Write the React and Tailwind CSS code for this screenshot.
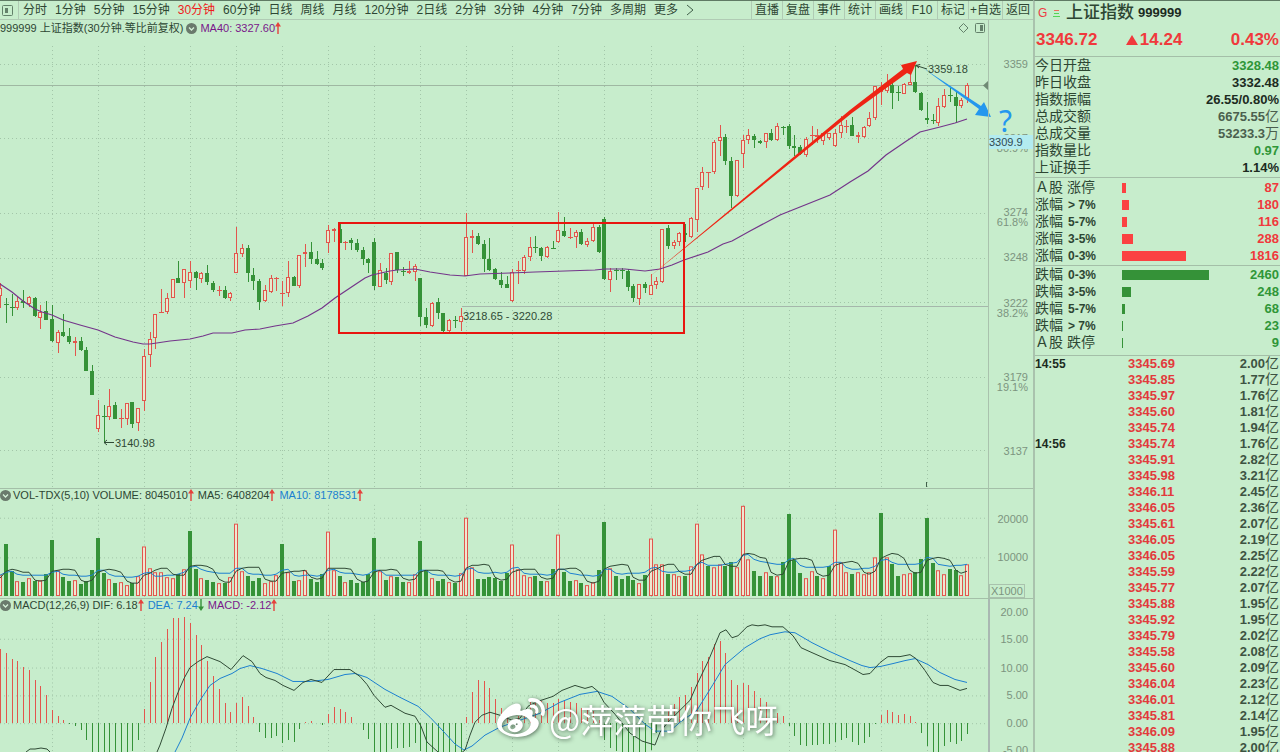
import React from "react";
import { FaWeibo } from "react-icons/fa";

const RED = "#e2554d";
const GREEN = "#359238";
const STEP = 5.757;
const PLOT_W = 988;

// each plot keeps its own slice of one shared vertical scale
const PRICE = { top: 20, height: 468 };
const VOLUME = { top: 488, height: 110 };
const MACD = { top: 598, height: 154 };

// [up, high, body top, body bottom, low]
const candles = [
  [1, 283, 288, 296, 308], [0, 298, 304, 305, 323], [0, 294, 307, 307, 316], [1, 297, 301, 308, 310],
  [0, 290, 301, 303, 308], [1, 296, 297, 304, 307], [0, 297, 298, 316, 317], [1, 305, 312, 318, 329],
  [0, 301, 311, 320, 320], [0, 305, 319, 341, 342], [1, 330, 332, 343, 353], [0, 314, 332, 336, 337],
  [0, 328, 336, 342, 344], [1, 337, 341, 343, 356], [0, 337, 341, 350, 351], [0, 347, 350, 371, 371],
  [0, 365, 371, 395, 395], [1, 400, 415, 429, 432], [0, 405, 416, 417, 443], [1, 389, 406, 417, 420],
  [0, 402, 405, 419, 419], [1, 409, 418, 419, 428], [1, 403, 403, 419, 425], [0, 402, 402, 424, 428],
  [1, 408, 408, 423, 431], [1, 349, 356, 401, 411], [1, 332, 339, 355, 367], [1, 314, 314, 338, 349],
  [1, 289, 312, 313, 313], [1, 293, 298, 312, 314], [1, 279, 279, 298, 298], [0, 261, 278, 283, 283],
  [1, 269, 269, 283, 298], [1, 261, 272, 281, 288], [0, 271, 272, 278, 290], [1, 272, 273, 279, 283],
  [0, 265, 273, 282, 285], [0, 281, 283, 290, 292], [1, 286, 290, 291, 296], [0, 286, 290, 298, 299],
  [1, 292, 293, 298, 301], [1, 227, 253, 273, 273], [1, 244, 248, 254, 257], [0, 245, 248, 273, 282],
  [0, 268, 275, 281, 290], [0, 279, 281, 302, 310], [1, 285, 290, 301, 302], [1, 275, 278, 292, 293],
  [1, 277, 278, 279, 291], [1, 281, 293, 294, 306], [1, 261, 277, 293, 297], [0, 276, 277, 286, 286],
  [1, 255, 255, 286, 288], [1, 244, 252, 254, 267], [0, 242, 252, 259, 264], [0, 251, 259, 264, 265],
  [0, 259, 263, 268, 270], [1, 225, 230, 243, 253], [1, 228, 229, 231, 242], [0, 223, 229, 243, 243],
  [1, 241, 242, 243, 250], [0, 238, 240, 243, 250], [0, 239, 243, 250, 252], [0, 247, 250, 259, 265],
  [0, 258, 259, 263, 273], [0, 238, 242, 286, 290], [1, 263, 270, 287, 287], [0, 268, 273, 280, 284],
  [1, 253, 253, 282, 285], [0, 252, 252, 270, 273], [0, 267, 271, 272, 276], [1, 261, 271, 273, 274],
  [1, 264, 266, 272, 281], [0, 278, 278, 317, 326], [0, 308, 317, 325, 328], [1, 302, 303, 326, 327],
  [0, 298, 302, 313, 319], [0, 313, 313, 331, 332], [1, 319, 320, 331, 333], [0, 316, 320, 321, 328],
  [1, 308, 316, 322, 331], [1, 213, 237, 276, 276], [1, 230, 236, 238, 253], [0, 233, 236, 244, 245],
  [0, 240, 244, 259, 272], [0, 238, 259, 270, 271], [0, 268, 269, 279, 280], [0, 272, 280, 285, 288],
  [0, 276, 284, 288, 288], [1, 269, 272, 301, 302], [1, 261, 270, 271, 284], [1, 255, 257, 271, 274],
  [1, 237, 247, 257, 261], [0, 236, 247, 248, 253], [0, 247, 248, 256, 261], [1, 246, 247, 257, 258],
  [0, 241, 248, 249, 249], [1, 212, 230, 242, 243], [0, 217, 231, 236, 237], [1, 228, 237, 238, 239],
  [1, 230, 232, 237, 248], [0, 229, 232, 244, 245], [1, 238, 241, 245, 247], [1, 222, 227, 241, 242],
  [0, 225, 227, 252, 253], [0, 217, 219, 279, 280], [1, 268, 271, 280, 292], [0, 268, 270, 271, 280],
  [0, 268, 270, 271, 279], [0, 269, 271, 287, 291], [0, 284, 286, 298, 302], [1, 284, 284, 299, 305],
  [0, 282, 284, 288, 293], [1, 274, 285, 295, 295], [1, 277, 281, 285, 289], [1, 229, 229, 282, 283],
  [0, 225, 228, 246, 249], [1, 240, 242, 246, 249], [1, 232, 233, 242, 246], [0, 224, 233, 235, 242],
  [1, 217, 218, 237, 238], [1, 188, 188, 220, 232], [1, 167, 172, 187, 190], [1, 172, 172, 173, 188],
  [1, 140, 142, 172, 174], [1, 125, 137, 141, 156], [0, 134, 137, 161, 165], [0, 157, 161, 196, 208],
  [1, 160, 160, 196, 197], [1, 135, 140, 154, 168], [1, 129, 135, 140, 144], [0, 134, 136, 140, 148],
  [0, 140, 141, 143, 144], [1, 133, 133, 142, 148], [0, 129, 133, 140, 141], [1, 123, 126, 140, 141],
  [0, 126, 127, 128, 135], [0, 124, 126, 146, 149], [0, 135, 146, 148, 156], [0, 145, 147, 154, 155],
  [1, 137, 139, 155, 157], [1, 126, 135, 136, 145], [1, 129, 135, 137, 143], [1, 133, 133, 141, 145],
  [1, 133, 133, 138, 140], [1, 129, 133, 146, 147], [1, 116, 125, 133, 138], [1, 120, 126, 127, 133],
  [0, 117, 125, 136, 136], [1, 132, 135, 137, 143], [1, 126, 127, 137, 138], [1, 112, 118, 126, 127],
  [1, 86, 86, 118, 120], [1, 82, 87, 92, 105], [1, 74, 86, 91, 93], [0, 82, 85, 93, 109],
  [0, 86, 92, 93, 101], [1, 83, 84, 94, 94], [1, 72, 82, 85, 85], [0, 65, 82, 92, 93],
  [0, 92, 93, 110, 111], [0, 102, 118, 120, 124], [0, 114, 120, 121, 124], [1, 98, 106, 123, 126],
  [1, 89, 95, 107, 108], [0, 88, 95, 96, 102], [0, 92, 97, 106, 122], [1, 98, 100, 106, 108],
  [1, 83, 85, 98, 103],
];

// negative = falling bar
const volumes = [
  62, -157, -74, 44, -43, 53, -46, 47, -65, -172, 78, -56, -44, 48, -35, -46, -77, -176, -69, 50,
  -38, 42, 34, -39, 59, 151, 84, 73, 73, 58, 55, -67, 82, -199, -82, 55, -48, -43, 40, -38,
  58, 218, 76, -61, -44, -53, 40, 44, 64, -157, 73, -45, 48, 79, -50, -43, -67, 194, 78, -59,
  43, -47, -40, -42, -67, -176, 74, -47, 59, -56, -43, 43, 66, -168, -78, 54, -45, -50, 43, -40,
  69, 238, 86, -52, -50, -56, -54, -45, -68, 157, 80, 63, 56, -59, -44, 44, -80, 187, -71, -46,
  48, -40, 34, 43, -77, -224, 84, -59, -50, -59, -48, 40, -63, 175, 97, 95, -67, 66, 59, -61,
  90, 219, 127, -90, 88, 97, -90, -103, 88, 274, 112, -74, -59, 71, -61, 60, -101, -248, -107, -68,
  55, 76, -59, 55, -89, 202, 103, 73, -67, 72, 67, 73, 118, -253, 118, -95, -59, 67, 69, -71,
  -110, -238, -98, 79, 67, -80, -77, 64, 96,
];

const histogram = [
  226, 212, 196, 188, 172, 163, 130, 111, 84, 39, 22, 10, -4, -10, -22, -52, -90, -95, -95, -95,
  -95, -95, -95, -83, -50, 41, 122, 202, 247, 285, 319, 319, 322, 303, 268, 238, 188, 142, 103, 60,
  34, 60, 78, 51, 19, -28, -46, -45, -40, -60, -52, -56, -19, 4, 7, 0, -5, 28, 48, 41,
  34, 19, 0, -22, -47, -90, -95, -90, -78, -76, -75, -72, -60, -85, -95, -95, -95, -95, -95, -95,
  -88, 19, 93, 130, 127, 105, 73, 46, 25, 10, 20, 38, 62, 72, 66, 60, 60, 73, 70, 62,
  60, 45, 40, 35, 10, -52, -75, -85, -95, -95, -95, -95, -90, -80, -30, -10, 35, 58, 79, 85,
  108, 153, 189, 202, 240, 250, 212, 130, 113, 120, 115, 97, 74, 62, 45, 30, 20, -10, -38, -67,
  -68, -65, -67, -62, -64, -56, -50, -46, -57, -65, -60, -43, -2, 23, 39, 34, 25, 27, 21, 3,
  -30, -68, -95, -95, -68, -56, -62, -53, -33,
];

const ma40 =
  "0,284 12,292 23,301 35,309 42,312 52,315 63,320 80,325 98,330 115,337 133,342 143,344 150,344 170,341 190,339 203,336 213,333 232,333 245,330 260,329 275,326 293,323 308,316 322,308 335,298 350,288 365,278 372,275 390,271 397,270 415,269 430,272 450,275 465,276 480,274 510,273 535,272 595,270 605,269 625,269 645,271 660,269 672,265 684,260 708,252 723,244 732,241 750,231 780,215 800,207 830,195 850,182 868,171 886,155 905,142 920,132 940,127 955,123 967,119";
const dif =
  "26,752 30,749 35,749 41,748 47,749 50,752 60,790 140,790 157,752 160,745 166,728 172,708 178,692 184,678 190,667 198,661 207,656 220,661 231,669 243,655 252,661 260,673 266,677 275,680 283,685 294,690 303,682 311,679 322,682 334,669 350,669 360,676 367,684 374,695 385,707 391,705 405,713 415,716 421,726 427,742 438,752 450,762 465,750 470,735 475,722 482,715 490,712 500,715 512,720 520,718 528,706 538,701 553,696 562,690 575,685 585,688 592,686 598,691 604,702 615,714 630,733 642,741 655,745 660,732 668,722 680,710 690,700 697,684 708,661 720,632 726,629 732,637 738,635 747,626 752,624 758,625 765,624 772,626 783,626 793,635 801,647 812,652 830,660 845,664 856,670 863,674 870,673 880,662 888,656 900,656 910,654 916,658 925,670 933,682 940,685 948,685 960,690 967,688";
const dea =
  "175,752 182,738 190,718 200,700 210,685 220,678 232,673 240,668 250,665 262,668 277,673 293,681 310,681 328,679 345,674 355,673 367,677 385,689 400,697 418,706 430,717 445,733 455,744 464,750 472,746 485,735 500,727 520,720 540,713 560,702 580,694 597,691 612,696 630,709 645,724 655,731 670,731 680,722 697,710 713,684 725,664 745,647 760,638 770,634 785,631 795,632 812,642 830,651 850,660 862,665 870,667 880,666 893,663 905,660 915,658 928,664 940,672 955,679 967,682";

const periods = [
  "分时", "1分钟", "5分钟", "15分钟", "30分钟", "60分钟", "日线", "周线", "月线", "120分钟",
  "2日线", "2分钟", "3分钟", "4分钟", "7分钟", "多周期", "更多",
];
const actions = ["直播", "复盘", "事件", "统计", "画线", "F10", "标记", "+自选", "返回"];

const quotes = [
  { label: "今日开盘", value: "3328.48", color: "text-[#2f9638]" },
  { label: "昨日收盘", value: "3332.48", color: "text-[#1c2b1f]" },
  { label: "指数振幅", value: "26.55/0.80%", color: "text-[#1c2b1f]" },
  { label: "总成交额", value: "6675.55", unit: "亿", color: "text-[#4b5f4e]" },
  { label: "总成交量", value: "53233.3", unit: "万", color: "text-[#4b5f4e]" },
  { label: "指数量比", value: "0.97", color: "text-[#2f9638]" },
  { label: "上证换手", value: "1.14%", color: "text-[#1c2b1f]" },
];

const risers = [
  { name: "Ａ股 涨停", range: "", count: 87, bar: 4 },
  { name: "涨幅", range: "> 7%", count: 180, bar: 7 },
  { name: "涨幅", range: "5-7%", count: 116, bar: 5 },
  { name: "涨幅", range: "3-5%", count: 288, bar: 11 },
  { name: "涨幅", range: "0-3%", count: 1816, bar: 64 },
];
const fallers = [
  { name: "跌幅", range: "0-3%", count: 2460, bar: 87 },
  { name: "跌幅", range: "3-5%", count: 248, bar: 9 },
  { name: "跌幅", range: "5-7%", count: 68, bar: 3 },
  { name: "跌幅", range: "> 7%", count: 23, bar: 1 },
  { name: "Ａ股 跌停", range: "", count: 9, bar: 1 },
];

const trades = [
  ["14:55", "3345.69", "2.00"], ["", "3345.85", "1.77"], ["", "3345.97", "1.76"],
  ["", "3345.60", "1.81"], ["", "3345.74", "1.94"], ["14:56", "3345.74", "1.76"],
  ["", "3345.91", "2.82"], ["", "3345.98", "3.21"], ["", "3346.11", "2.45"],
  ["", "3346.05", "2.36"], ["", "3345.61", "2.07"], ["", "3346.05", "2.19"],
  ["", "3346.05", "2.25"], ["", "3345.59", "2.22"], ["", "3345.77", "2.07"],
  ["", "3345.88", "1.95"], ["", "3345.92", "1.95"], ["", "3345.79", "2.02"],
  ["", "3345.58", "2.08"], ["", "3345.60", "2.09"], ["", "3346.04", "2.23"],
  ["", "3346.01", "2.12"], ["", "3345.81", "2.14"], ["", "3346.09", "1.95"],
  ["", "3345.88", "2.00"],
];

const cx = (i) => Math.round(i * STEP);
const topPct = (y, area) => `${((y - area.top) / area.height) * 100}%`;
const leftPct = (x) => `${(x / PLOT_W) * 100}%`;

// moving average of the volume bars, as polyline points
const volumeAverage = (n) => {
  const seed = [50, 50, 150, 70, 50, 50, 50, 60, 62];
  const all = [...seed, ...volumes.map(Math.abs)];
  return volumes
    .map((_, i) => {
      const end = i + seed.length + 1;
      const sum = all.slice(end - n, end).reduce((a, b) => a + b, 0);
      return `${cx(i)},${Math.round(597 - sum / n / 3)}`;
    })
    .join(" ");
};

const Grid = ({ rows, top, bottom }) => (
  <g stroke="#a3c6a9" strokeDasharray="1 3" shapeRendering="crispEdges">
    {rows.map((y) => (
      <line key={y} x1="0" x2="988" y1={y + 0.5} y2={y + 0.5} />
    ))}
    {Array.from({ length: 20 }, (_, k) => cx(9 + k * 8)).map((x) => (
      <line key={x} x1={x + 0.5} x2={x + 0.5} y1={top} y2={bottom} />
    ))}
  </g>
);

const Plot = ({ area, children }) => (
  <svg
    viewBox={`0 ${area.top} ${PLOT_W} ${area.height}`}
    preserveAspectRatio="none"
    className="absolute inset-0 h-full w-full overflow-visible"
    aria-hidden="true"
  >
    {children}
  </svg>
);

const Tick = ({ y, area, children }) => (
  <span
    className="absolute right-[5px] -translate-y-1/2 leading-3 text-[#7c947f]"
    style={{ top: topPct(y, area) }}
  >
    {children}
  </span>
);

const Dot = () => (
  <svg viewBox="0 0 11 11" className="h-[11px] w-[11px] shrink-0">
    <circle cx="5.5" cy="5.5" r="5.5" fill="#6a7a6c" />
    <path d="M3 4.5 5.5 7 8 4.5" fill="none" stroke="#d5f0d8" strokeWidth="1.3" />
  </svg>
);

const Arrow = ({ down }) => (
  <svg viewBox="0 0 6 12" className="h-3 w-[6px] shrink-0">
    {down ? (
      <path d="M2.300 0h1.400v7.500H6L3 12 0 7.500h2.300z" fill={GREEN} />
    ) : (
      <path d="M2.300 12h1.400V4.500H6L3 0 0 4.500h2.300z" fill="#e5413c" />
    )}
  </svg>
);

const PriceChart = () => (
  <section className="relative flex min-h-0 flex-1">
    <div className="relative min-w-0 flex-1">
      <Plot area={PRICE}>
        <Grid rows={[64, 138, 213, 258, 302, 377, 450]} top={46} bottom={487} />
        <g shapeRendering="crispEdges">
          <line x1="0" x2="988" y1="85.5" y2="85.5" stroke="#9fb8a2" />
          <line x1="462" x2="988" y1="306.5" y2="306.5" stroke="#a5b7ab" />
          <line x1="926.5" x2="926.5" y1="482" y2="487" stroke="#41604a" />
          {candles.map(([up, high, top, bottom, low], i) => {
            const x = cx(i);
            const color = up ? RED : GREEN;
            return (
              <g key={i}>
                <line x1={x + 0.5} x2={x + 0.5} y1={high} y2={low} stroke={color} />
                {bottom - top < 2 ? (
                  <rect x={x - 2} y={top} width="5" height="1" fill={color} />
                ) : up ? (
                  <rect x={x - 1.5} y={top + 0.5} width="3" height={bottom - top - 1} fill="#e6ebcd" stroke={color} />
                ) : (
                  <rect x={x - 2} y={top} width="4" height={bottom - top} fill={color} />
                )}
              </g>
            );
          })}
        </g>
        <polyline points={ma40} fill="none" stroke="#74358a" strokeWidth="1.2" />
        <path d="M114 442.5H104M107 440l-3 2.5 3 2.5" fill="none" stroke="#2f4a35" />
        <path d="M927 69 916 65.5M919 68l-3-2.5 4-1" fill="none" stroke="#2f4a35" />
        <rect x="339" y="223" width="345" height="110" fill="none" stroke="#e8160f" strokeWidth="2" />
        <polygon points="648,278 850,110 903,69 901,65 917,61 911,75 907,73 852,113" fill="#ee2414" />
        <polygon points="923,68 981,106 984,102 991,117 975,115 979,109" fill="#2497ee" />
        <path d="M988 81v9l-5-4.500z" fill="#6f8a74" />
      </Plot>
      <div className="relative flex h-4 items-center gap-[3px] whitespace-nowrap text-[#2d4633]">
        <span>999999 上证指数(30分钟.等比前复权)</span>
        <Dot />
        <span className="flex items-center text-[#79178a]">
          MA40: 3327.60
          <Arrow />
        </span>
        <svg viewBox="0 0 28 12" className="mr-[2px] ml-auto h-3 w-7" fill="none" stroke="#63806a">
          <path d="M5.500 1.500 10 6 5.500 10.500 1 6z" />
          <rect x="17.500" y="1.500" width="9" height="9" rx="1" />
          <rect x="22" y="3" width="3" height="6" fill="#63806a" stroke="none" />
        </svg>
      </div>
      <span
        className="absolute -translate-y-1/2 text-[#2f4a35]"
        style={{ left: leftPct(115), top: topPct(443, PRICE) }}
      >
        3140.98
      </span>
      <span
        className="absolute -translate-y-1/2 text-[#2f4a35]"
        style={{ left: leftPct(463), top: topPct(316, PRICE) }}
      >
        3218.65 - 3220.28
      </span>
      <span
        className="absolute -translate-y-1/2 text-[#2f4a35]"
        style={{ left: leftPct(928), top: topPct(69, PRICE) }}
      >
        3359.18
      </span>
    </div>
    <div className="relative w-[45px] border-l border-[#a9c2ad]">
      <Tick y={64} area={PRICE}>3359</Tick>
      <Tick y={138} area={PRICE}>3317</Tick>
      <Tick y={148} area={PRICE}>80.9%</Tick>
      <Tick y={212} area={PRICE}>3274</Tick>
      <Tick y={222} area={PRICE}>61.8%</Tick>
      <Tick y={257} area={PRICE}>3248</Tick>
      <Tick y={303} area={PRICE}>3222</Tick>
      <Tick y={313} area={PRICE}>38.2%</Tick>
      <Tick y={377} area={PRICE}>3179</Tick>
      <Tick y={387} area={PRICE}>19.1%</Tick>
      <Tick y={451} area={PRICE}>3137</Tick>
      <span
        className="absolute left-0 w-11 -translate-y-1/2 bg-[#b3ecf0] leading-[14px] text-[#2f4a52]"
        style={{ top: topPct(142, PRICE) }}
      >
        3309.9
      </span>
      <span
        className="absolute left-[10px] -translate-y-1/2 font-['Noto_Sans',sans-serif] text-[30px] leading-none text-[#2497ee]"
        style={{ top: topPct(121, PRICE) }}
      >
        ?
      </span>
    </div>
  </section>
);

const VolumeChart = () => (
  <section className="flex h-[110px] shrink-0 border-t border-[#a4bfa8]">
    <div className="relative min-w-0 flex-1">
      <Plot area={VOLUME}>
        <Grid rows={[517, 557]} top={504} bottom={597} />
        <g shapeRendering="crispEdges">
          {volumes.map((v, i) => {
            const h = Math.round(Math.abs(v) / 3);
            const x = cx(i);
            return v > 0 ? (
              <rect key={i} x={x - 1.5} y={596.5 - h} width="3" height={h - 1} fill="#f0e6d0" stroke={RED} />
            ) : (
              <rect key={i} x={x - 2} y={596 - h} width="4" height={h} fill={GREEN} />
            );
          })}
        </g>
        <polyline points={volumeAverage(10)} fill="none" stroke="#1b7fd0" />
        <polyline points={volumeAverage(5)} fill="none" stroke="#2f4a35" />
      </Plot>
      <div className="relative flex h-3 items-center whitespace-nowrap text-[#2d4633]">
        <Dot />
        <span className="ml-[2px]">VOL-TDX(5,10)</span>
        <span className="ml-[3px]">VOLUME: 8045010</span>
        <Arrow />
        <span className="ml-1">MA5: 6408204</span>
        <Arrow />
        <span className="ml-1 text-[#1b7fd0]">MA10: 8178531</span>
        <Arrow />
      </div>
    </div>
    <div className="relative w-[45px] border-l border-[#a9c2ad]">
      <Tick y={518} area={VOLUME}>20000</Tick>
      <Tick y={557} area={VOLUME}>10000</Tick>
      <span className="absolute bottom-0 left-0 border border-[#a9c2ad] px-px leading-3 text-[#7c947f]">
        X1000
      </span>
    </div>
  </section>
);

const MacdChart = () => (
  <section className="flex h-[154px] shrink-0 border-t border-[#a4bfa8]">
    <div className="relative min-w-0 flex-1 overflow-hidden">
      <Plot area={MACD}>
        <Grid rows={[638, 667, 695, 723]} top={614} bottom={752} />
        <g shapeRendering="crispEdges">
          {histogram.map((v, i) => {
            const h = Math.round(Math.abs(v) / 3);
            return (
              <rect
                key={i}
                x={cx(i)}
                y={v > 0 ? 723 - h : 723}
                width="1"
                height={h}
                fill={v > 0 ? RED : GREEN}
              />
            );
          })}
        </g>
        <polyline points={dea} fill="none" stroke="#1b7fd0" />
        <polyline points={dif} fill="none" stroke="#2f4a35" />
      </Plot>
      <div className="relative flex h-3 items-center whitespace-nowrap text-[#2d4633]">
        <Dot />
        <span className="ml-[2px]">MACD(12,26,9)</span>
        <span className="ml-[3px]">DIF: 6.18</span>
        <Arrow />
        <span className="ml-1 text-[#1b7fd0]">DEA: 7.24</span>
        <Arrow down />
        <span className="ml-1 text-[#79178a]">MACD: -2.12</span>
        <Arrow />
      </div>
      <div
        className="absolute flex -translate-y-1/2 items-center gap-1 whitespace-nowrap text-white drop-shadow-[1px_1px_2px_rgba(40,60,45,0.7)]"
        style={{ left: leftPct(497), top: topPct(719, MACD) }}
      >
        <FaWeibo className="h-12 w-12" />
        <span className="font-['Noto_Sans_CJK_SC',sans-serif] text-[33px] leading-none">@萍萍带你飞呀</span>
      </div>
    </div>
    <div className="relative w-[45px] overflow-hidden border-l-2 border-[#a9b8b2]">
      <Tick y={611} area={MACD}>20.00</Tick>
      <Tick y={638} area={MACD}>15.00</Tick>
      <Tick y={667} area={MACD}>10.00</Tick>
      <Tick y={695} area={MACD}>5.00</Tick>
      <Tick y={723} area={MACD}>0.00</Tick>
      <Tick y={750} area={MACD}>-5.00</Tick>
    </div>
  </section>
);

const Toolbar = () => (
  <nav className="flex h-5 shrink-0 items-center border-t border-b border-t-[#5f7a64] border-b-[#b0cbb4] text-[12px] leading-4 whitespace-nowrap text-[#2d4633]">
    <button type="button" aria-label="侧栏" className="flex h-full w-[19px] items-center border-r border-[#b0cbb4] pl-[2px]">
      <svg viewBox="0 0 11 11" className="h-[11px] w-[11px]" fill="none" stroke="#63806a">
        <rect x="0.500" y="0.500" width="10" height="10" rx="1" />
        <rect x="3" y="3" width="3" height="5" fill="#63806a" stroke="none" />
      </svg>
    </button>
    <div className="flex gap-2 pl-1">
      {periods.map((p) => (
        <button key={p} type="button" className={p === "30分钟" ? "text-[#ee1c1c]" : ""}>
          {p}
        </button>
      ))}
      <svg viewBox="0 0 8 16" className="h-4 w-2" fill="none" stroke="#41604a">
        <path d="M1 3l6 5-6 5" />
      </svg>
    </div>
    <div className="ml-auto flex h-full items-center">
      {actions.map((a) => (
        <button key={a} type="button" className="h-full min-w-[31px] border-l border-[#b0cbb4] px-px">
          {a}
        </button>
      ))}
    </div>
  </nav>
);

const Breadth = ({ rows, rising }) => (
  <table className="w-full table-fixed border-collapse">
    <tbody>
      {rows.map((r) => (
        <tr key={r.name + r.range} className="h-[17px]">
          <th scope="row" className="w-[87px] p-0 text-left text-[14px] leading-[17px] font-normal whitespace-nowrap">
            {r.name}
            {r.range && <b className="ml-[5px] text-[12px] leading-none">{r.range}</b>}
          </th>
          <td className="p-0">
            <div
              className={rising ? "h-[10px] bg-[#fb4242]" : "h-[10px] bg-[#359238]"}
              style={{ width: r.bar }}
            />
          </td>
          <td
            className={
              rising
                ? "w-11 p-0 text-right leading-[17px] font-bold text-[#f0393c]"
                : "w-11 p-0 text-right leading-[17px] font-bold text-[#2f9638]"
            }
          >
            {r.count}
          </td>
        </tr>
      ))}
    </tbody>
  </table>
);

const Sidebar = () => (
  <aside className="flex w-[247px] shrink-0 flex-col overflow-hidden border-t border-l-2 border-t-[#5f7a64] border-l-[#a9c2ad] text-[13px] text-[#2d4633]">
    <h1 className="flex h-6 shrink-0 items-center pl-[3px] leading-6 font-normal whitespace-nowrap">
      <span className="w-[15px] text-[12px] text-[#ee3a44]">G</span>
      <svg viewBox="0 0 7 9" className="mr-[6px] h-[9px] w-[7px]">
        <path d="M1 1.500h5" stroke="#ee6a60" />
        <path d="M1 4.500h5M0 7.500h7" stroke="#55d455" />
      </svg>
      <span className="text-[17px] font-medium">上证指数</span>
      <b className="ml-1 text-[#1c2b1f]">999999</b>
    </h1>
    <div className="flex h-[31px] shrink-0 items-center justify-between pr-px pb-[2px] pl-px text-[17px] font-bold text-[#f0393c]">
      <span>3346.72</span>
      <span className="mr-5 flex items-center gap-[2px]">
        <svg viewBox="0 0 12 10" className="h-[10px] w-3">
          <path d="M6 0l6 10H0z" fill="#f0393c" />
        </svg>
        14.24
      </span>
      <span>0.43%</span>
    </div>
    <div className="shrink-0 border-t border-[#a4bfa8] pr-px pb-px">
      <table className="w-full border-collapse">
        <tbody>
          {quotes.map((q) => (
            <tr key={q.label} className="h-[17px]">
              <th scope="row" className="p-0 text-left text-[14px] leading-[17px] font-normal">
                {q.label}
              </th>
              <td className={`p-0 text-right leading-[17px] font-bold ${q.color}`}>
                {q.value}
                {q.unit && <span className="text-[14px] leading-none font-normal">{q.unit}</span>}
              </td>
            </tr>
          ))}
        </tbody>
      </table>
    </div>
    <div className="shrink-0 border-t border-[#a4bfa8] py-px pr-px">
      <Breadth rows={risers} rising />
    </div>
    <div className="shrink-0 border-t border-[#a4bfa8] pr-px pb-1">
      <Breadth rows={fallers} />
    </div>
    <div className="border-t border-[#a4bfa8] pr-px">
      <table className="w-full table-fixed border-collapse">
        <tbody>
          {trades.map(([time, price, amount], i) => (
            <tr key={i} className="h-4">
              <td className="w-[93px] p-0 text-[12px] leading-4 font-bold text-[#1c2b1f]">{time}</td>
              <td className="p-0 leading-4 font-bold text-[#e23a3c]">{price}</td>
              <td className="p-0 text-right leading-4 font-bold text-[#3d5342]">
                {amount}
                <span className="text-[14px] leading-none font-normal">亿</span>
              </td>
            </tr>
          ))}
        </tbody>
      </table>
    </div>
  </aside>
);

const App = () => {
  return (
    <div className="flex h-screen overflow-hidden bg-[#c7edcc] font-['Liberation_Sans','Noto_Sans_CJK_SC',sans-serif]">
      <main className="flex min-w-0 flex-1 flex-col text-[11px] leading-[14px]">
        <Toolbar />
        <PriceChart />
        <VolumeChart />
        <MacdChart />
      </main>
      <Sidebar />
    </div>
  );
};

export default App;
